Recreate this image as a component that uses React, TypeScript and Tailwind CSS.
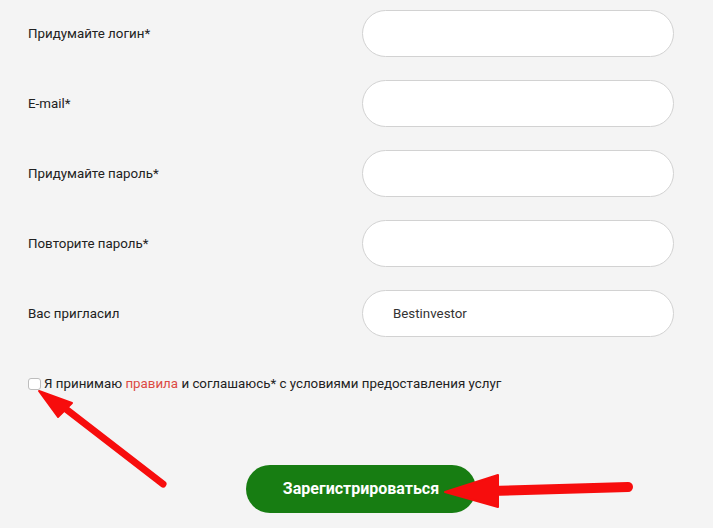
import React from 'react';

const fields = [
  { label: 'Придумайте логин*', value: '' },
  { label: 'E-mail*', value: '' },
  { label: 'Придумайте пароль*', value: '' },
  { label: 'Повторите пароль*', value: '' },
  { label: 'Вас пригласил', value: 'Bestinvestor' },
];

const App: React.FC = () => {
  return (
    <div className="relative w-[713px] h-[528px] overflow-hidden bg-[#f4f4f4] font-['Roboto',sans-serif] text-[13.33px] text-[#222]">
      <div className="pl-[28px] pt-[10px] flex flex-col gap-[23px]">
        {fields.map((f) => (
          <div key={f.label} className="flex items-center h-[47px]">
            <span className="w-[334px] shrink-0">{f.label}</span>
            <div className="w-[312px] h-[47px] rounded-full bg-white border border-[#d2d2d2] flex items-center pl-[30px] text-[#333]">
              {f.value}
            </div>
          </div>
        ))}
      </div>

      <div className="flex items-center pl-[28px] mt-[40px] h-[14px]">
        <span className="w-[13px] h-[12px] rounded-[3px] border border-[#bdbdbd] bg-white shrink-0" />
        <span className="ml-[3px]">
          Я принимаю <span className="text-[#dc4b43]">правила</span> и соглашаюсь* с условиями предоставления услуг
        </span>
      </div>

      <div className="pl-[246px] mt-[74px]">
        <button className="w-[230px] h-[48px] rounded-full bg-[#177d12] text-white font-bold text-[16px]">
          Зарегистрироваться
        </button>
      </div>

      <svg className="absolute inset-0 pointer-events-none" width="713" height="528" viewBox="0 0 713 528">
        <line x1="163" y1="484" x2="62" y2="406" stroke="#f70d0d" strokeWidth="7" strokeLinecap="round" />
        <polygon points="39,391 72,403 58,417" fill="#f70d0d" stroke="#f70d0d" strokeWidth="2" strokeLinejoin="round" />
        <line x1="628" y1="487" x2="490" y2="491" stroke="#f70d0d" strokeWidth="10" strokeLinecap="round" />
        <polygon points="445,492 498,475 498,507" fill="#f70d0d" stroke="#f70d0d" strokeWidth="2" strokeLinejoin="round" />
      </svg>
    </div>
  );
};

export default App;
